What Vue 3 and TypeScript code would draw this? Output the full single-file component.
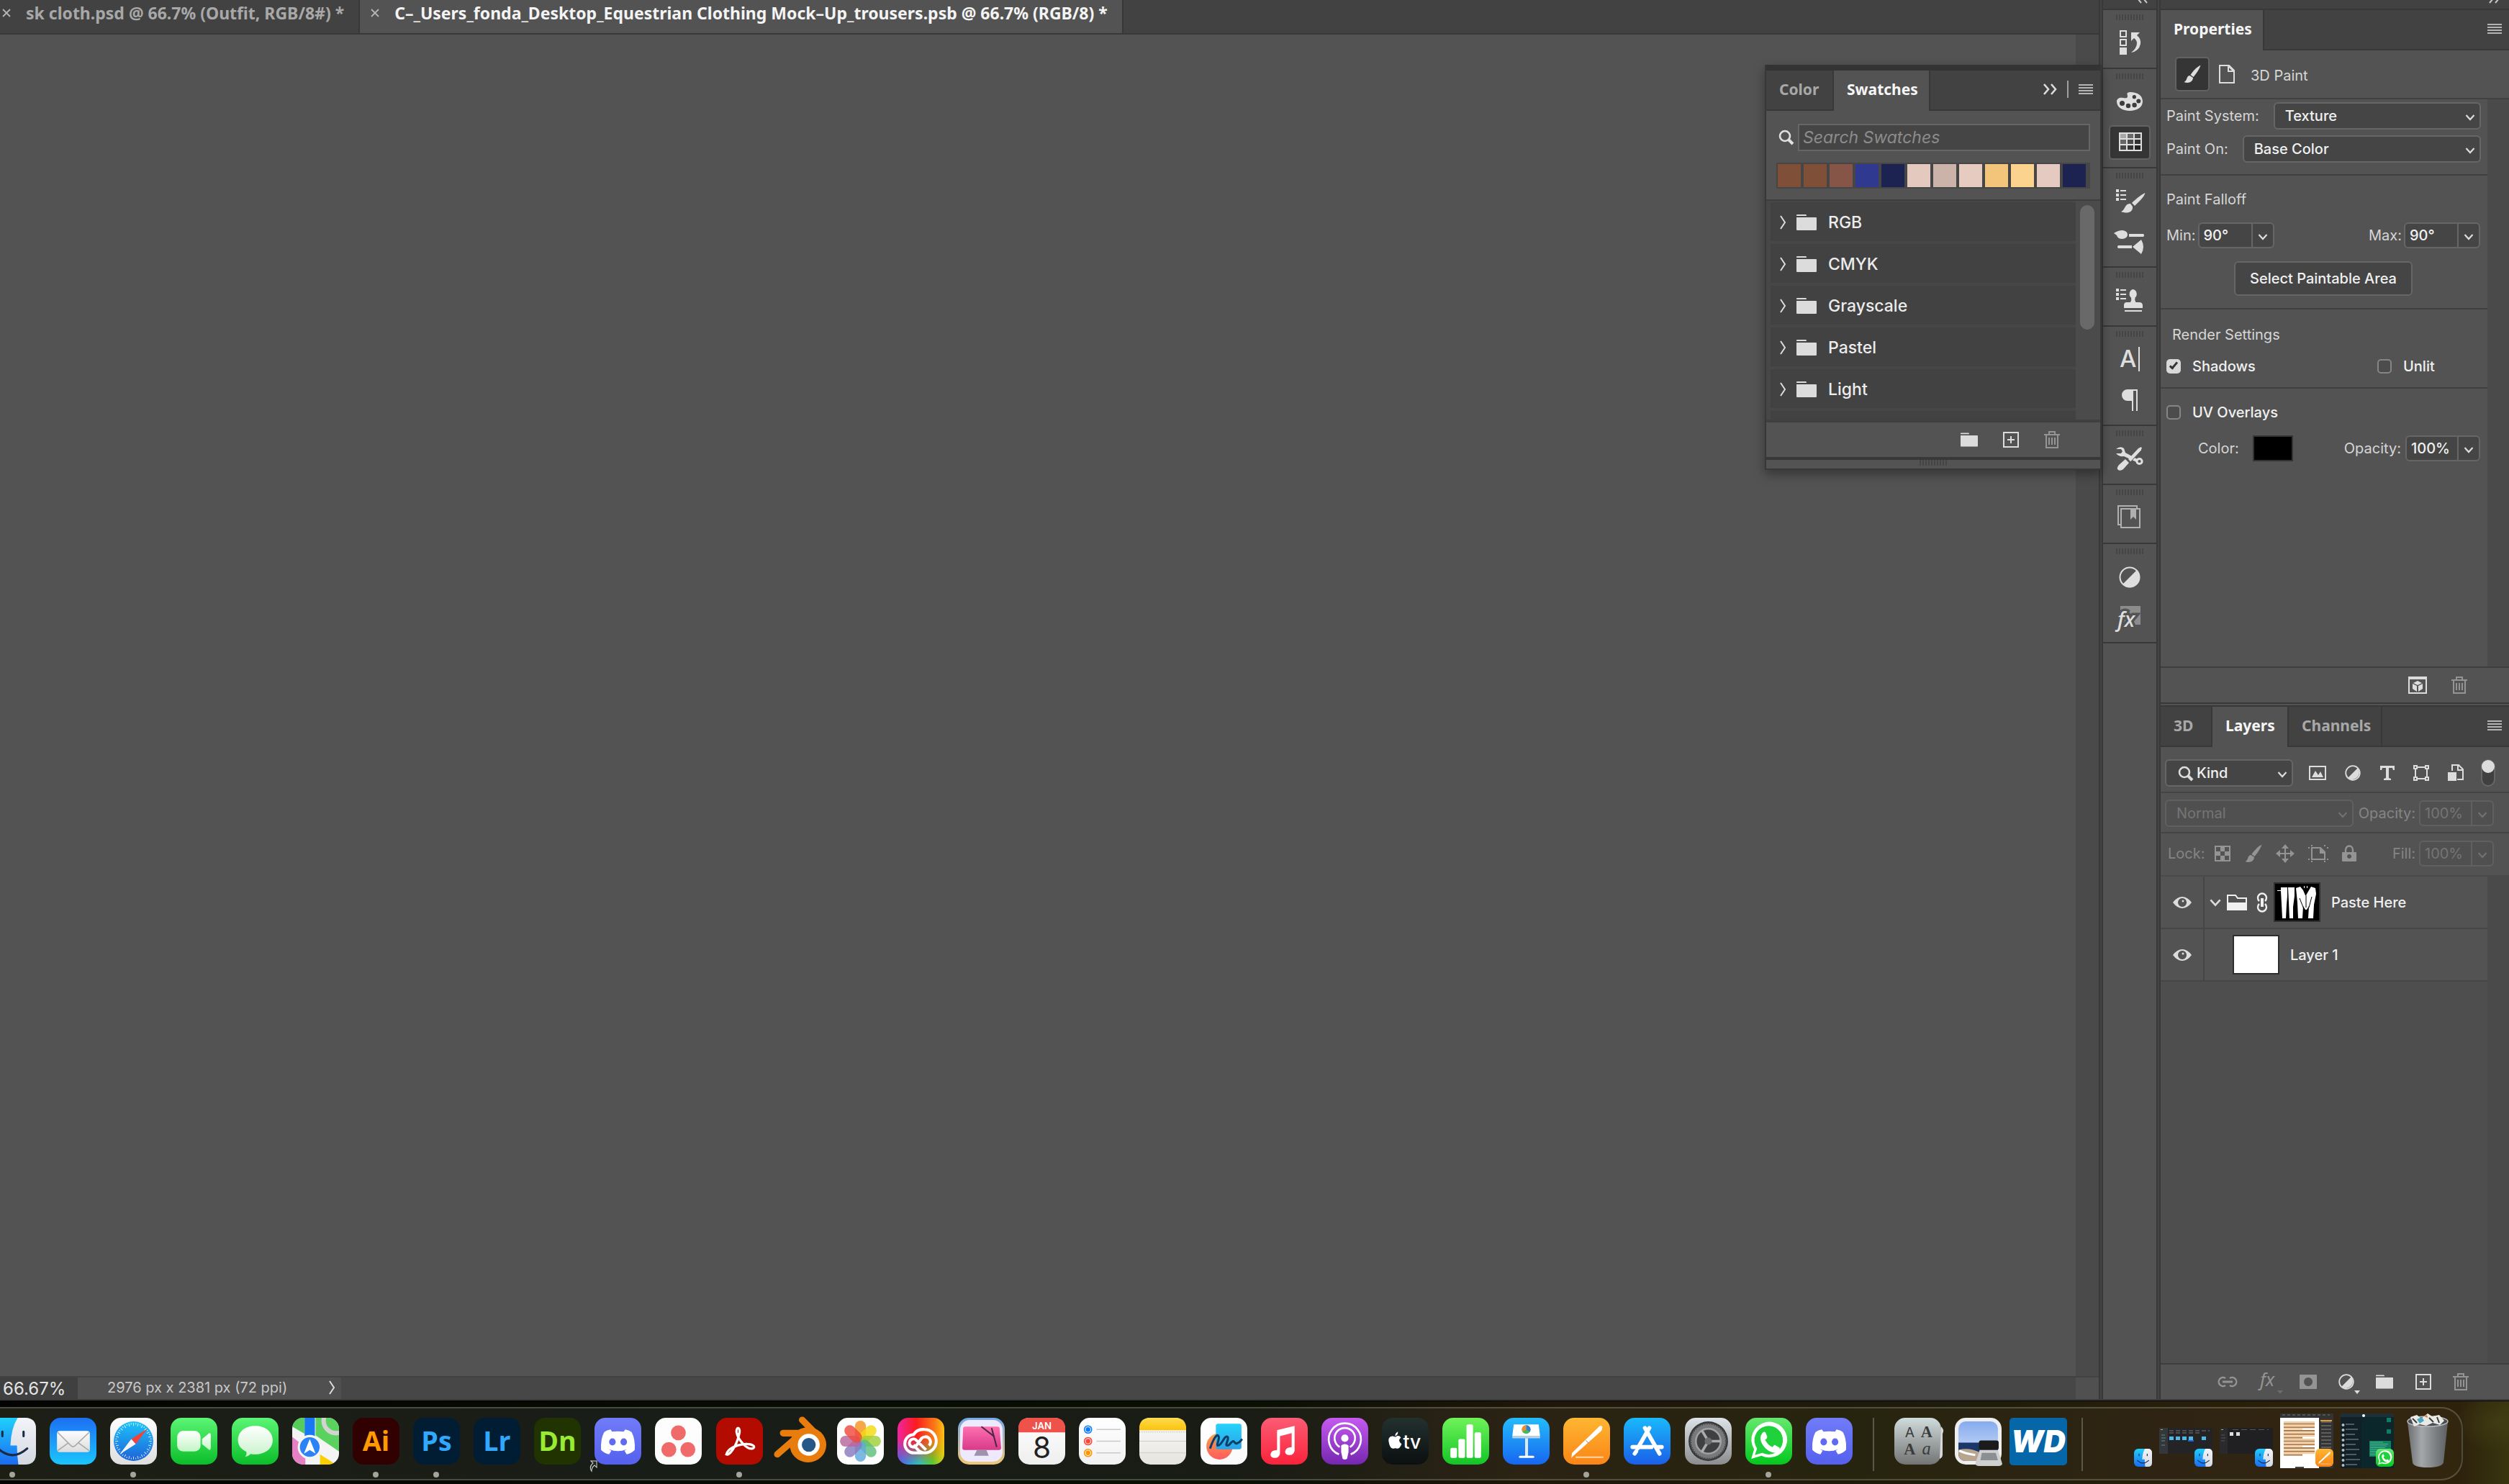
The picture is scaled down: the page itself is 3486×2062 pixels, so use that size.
<script setup lang="ts">
import { h, ref } from 'vue'

interface Glyph { w: number; h: number; body: string }

const listMark = '<path d="M1 3h4v4H1zM1 9h4v4H1zM1 15h4v4H1zM7 4h8v2H7zM7 10h8v2H7zM7 16h8v2H7z"/>'

const glyphs: Record<string, Glyph> = {
  chevron: { w: 14, h: 10, body: '<path d="M1.500 2l5.500 6 5.500-6" fill="none" stroke="currentColor" stroke-width="2.200"/>' },
  expand: { w: 10, h: 20, body: '<path d="M2 1l6 9-6 9" fill="none" stroke="currentColor" stroke-width="2"/>' },
  collapse: { w: 20, h: 16, body: '<path d="M2 1l6 7-6 7M12 1l6 7-6 7" fill="none" stroke="currentColor" stroke-width="2.600"/>' },
  left2: { w: 16, h: 14, body: '<path d="M7 1L2 7l5 6M15 1l-5 6 5 6" fill="none" stroke="currentColor" stroke-width="2"/>' },
  right2: { w: 16, h: 14, body: '<path d="M1 1l5 6-5 6M9 1l5 6-5 6" fill="none" stroke="currentColor" stroke-width="2"/>' },
  menu: { w: 20, h: 14, body: '<path d="M0 0h20v2H0zM0 4h20v2H0zM0 8h20v2H0zM0 12h20v2H0z"/>' },
  close: { w: 14, h: 14, body: '<path d="M2 2l10 10M12 2L2 12" stroke="currentColor" stroke-width="1.800"/>' },
  search: { w: 22, h: 22, body: '<circle cx="9" cy="9" r="7" fill="none" stroke="currentColor" stroke-width="2.600"/><path d="M14 14l6 6" stroke="currentColor" stroke-width="4"/>' },
  folder: { w: 28, h: 22, body: '<path d="M0 1q0-1 1-1h12q1 0 1 2H0zM0 4h27q1 0 1 1v16q0 1-1 1H1q-1 0-1-1z"/>' },
  plus: { w: 22, h: 22, body: '<path d="M1 1h20v20H1zM11 6v10M6 11h10" fill="none" stroke="currentColor" stroke-width="2"/>' },
  trash: { w: 22, h: 24, body: '<path d="M0 5h22M3 5v18h16V5M7 4V1h8v3M7 9v10M11 9v10M15 9v10" fill="none" stroke="currentColor" stroke-width="2"/>' },
  cube: { w: 26, h: 24, body: '<path d="M0 0h26v24H0zM2 4v18h22V4z" fill-rule="evenodd"/><path d="M13 6l6 3-6 3-6-3zM6 10l6 3v8l-6-4zM20 10l-6 3v8l6-4z"/>' },
  brush: { w: 24, h: 26, body: '<path d="M23.500 0.500C18 3 12 10 9.500 14l4 3C17 13 22 6 23.500 0.500zM8.500 15c-5 0-3 7-8 9 5 2 12 1 12.500-6z"/>' },
  page: { w: 22, h: 26, body: '<path d="M1 1h13l7 7v17H1z" fill="none" stroke="currentColor" stroke-width="2"/><path d="M12 1h3l7 7v2H12zM14 4v4h4z" fill-rule="evenodd"/>' },
  image: { w: 24, h: 20, body: '<path d="M1 1h22v18H1z" fill="none" stroke="currentColor" stroke-width="2"/><path d="M4 16l5-9 4 6 3-5 4 8z"/>' },
  adjust: { w: 22, h: 22, body: '<circle cx="11" cy="11" r="9.800" fill="none" stroke="currentColor" stroke-width="1.800"/><path d="M18 4a10 10 0 0 1-14 14z"/>' },
  type: { w: 20, h: 20, body: '<path d="M0 0h20v6h-2l-1-3h-5v14l3 1v2H5v-2l3-1V3H3L2 6H0z"/>' },
  shape: { w: 22, h: 22, body: '<path d="M3 3h16v16H3z" fill="none" stroke="currentColor" stroke-width="2"/><g fill="#535353" stroke="currentColor" stroke-width="2"><path d="M1 1h4v4H1zM17 1h4v4h-4zM1 17h4v4H1zM17 17h4v4h-4z"/></g>' },
  smart: { w: 22, h: 24, body: '<path d="M6 9V1h9l6 6v14h-8" fill="none" stroke="currentColor" stroke-width="2"/><path d="M14 1v7h7" fill="none" stroke="currentColor" stroke-width="2"/><path d="M0 11h12v12H0z"/>' },
  checker: { w: 22, h: 22, body: '<path d="M1 1h20v20H1z" fill="none" stroke="currentColor" stroke-width="2"/><path d="M8 2h6v6H8zM2 8h6v6H2zM14 8h6v6h-6zM8 14h6v6H8z"/>' },
  move: { w: 26, h: 26, body: '<path d="M13 3v20M3 13h20" stroke="currentColor" stroke-width="2"/><path d="M13 0l5 6H8zM13 26l5-6H8zM0 13l6-5v10zM26 13l-6-5v10z"/>' },
  artboard: { w: 28, h: 24, body: '<path d="M5 4h12l6 6v10H5z" fill="none" stroke="currentColor" stroke-width="2"/><path d="M16 4l8 8h-8zM0 3h2v2H0zM4 0h2v2H4zM22 0h2v2h-2zM26 3h2v2h-2zM0 19h2v2H0zM4 22h2v2H4zM22 22h2v2h-2zM26 19h2v2h-2z"/>' },
  lock: { w: 20, h: 24, body: '<path d="M5 11V7a5 5.500 0 0 1 10 0v4" fill="none" stroke="currentColor" stroke-width="2.400"/><path d="M1 10h18q1 0 1 1v11q0 1-1 1H1q-1 0-1-1V11q0-1 1-1zM10 13a3 3 0 1 0 .1 0z" fill-rule="evenodd"/>' },
  eye: { w: 26, h: 18, body: '<path d="M0 9Q6 1 13 1t13 8q-6 8-13 8T0 9zM13 3a6 6 0 1 0 .1 0z" fill-rule="evenodd"/><circle cx="14" cy="7" r="1.500"/>' },
  group: { w: 28, h: 22, body: '<path d="M1 12V1h11l3 4h12v8" fill="none" stroke="currentColor" stroke-width="2"/><path d="M0 11h28v11H0z"/>' },
  chain: { w: 16, h: 28, body: '<path d="M4 12a6 6 0 1 1 8 0M4 16a6 6 0 1 0 8 0" fill="none" stroke="currentColor" stroke-width="2.400"/><path d="M6 8h4v12H6z"/>' },
  link: { w: 30, h: 16, body: '<path d="M12 3a6 6 0 1 0 0 10M18 3a6 6 0 1 1 0 10" fill="none" stroke="currentColor" stroke-width="2.400"/><path d="M8 6.500h14v3H8z"/>' },
  fx: { w: 24, h: 28, body: '<text x="0" y="20" font-family="Noto Sans, sans-serif" font-style="italic" font-size="25">fx</text>' },
  mask: { w: 24, h: 20, body: '<path d="M1 0h22q1 0 1 1v18q0 1-1 1H1q-1 0-1-1V1q0-1 1-1zM12 4a6 6 0 1 0 .1 0z" fill-rule="evenodd"/>' },
  history: { w: 40, h: 40, body: '<path d="M7 3h8v8H7zM7 15h8v8H7z" fill="none" stroke="currentColor" stroke-width="2"/><path d="M6 26h10v10H6zM22 5h12L30 9Q36 14 35 21 33 31 22 33 30 27 30 20 30 16 26 13L22 17z"/>' },
  palette: { w: 40, h: 40, body: '<path d="M16.500 9C16 7 18 6 21 6c10 0 17 5 17 13S30 32 20 32 2 27 2 19c0-4 4-6 9-5s7 0 5.500-5z"/><g fill="#3c3c3c"><circle cx="9.500" cy="21.500" r="3.500"/><circle cx="18" cy="25" r="3.200"/><circle cx="26.600" cy="24" r="3.200"/><circle cx="32.300" cy="18.600" r="3"/><circle cx="26.300" cy="12.700" r="2.600"/></g>' },
  grid: { w: 40, h: 40, body: '<path d="M5 6h32v26H5z"/><path d="M7 8h8v6H7z" fill="#a8a8a8"/><path d="M17 8h8v6h-8z" fill="#6a6a6a"/><path d="M27 8h8v6h-8z" fill="#484848"/><path d="M7 16h8v6H7z" fill="#666"/><path d="M17 16h8v6h-8z" fill="#4a4a4a"/><path d="M27 16h8v6h-8z" fill="#333"/><path d="M7 24h8v6H7z" fill="#484848"/><path d="M17 24h8v6h-8z" fill="#333"/><path d="M27 24h8v6h-8z" fill="#222"/>' },
  brushes: { w: 40, h: 40, body: listMark + '<path d="M41.500 8C35 11 28 17 23 22l4 4C33 20 40 14 41.500 8zM21 23c-8-1-7 9-13 11 7 3 17 2 16-7z"/>' },
  brushSettings: { w: 40, h: 40, body: '<path d="M-2 8Q4 4 10 4q7 1 7 6t-7 6Q3 16 2 11zM19 9h20q2 2 0 4H19zM23 25H4q-2 2 0 4h19zM24 27l12-10q6 10 0 20z"/>' },
  stamp: { w: 40, h: 40, body: listMark + '<path d="M24.500 4a6 6.500 0 0 1 3 11.500q-1 3 1 6.500h5q4 0 4.500 4v4H12v-4q0-4 4-4h5q2-3 1-6.500A6 6.500 0 0 1 24.500 4zM13 33h24v2H13z"/>' },
  character: { w: 40, h: 40, body: '<text x="6" y="30" font-family="Inter, sans-serif" font-size="33" font-weight="500">A</text><path d="M32 2h2v34h-2z"/>' },
  paragraph: { w: 40, h: 40, body: '<path d="M17 5h14v30h-2V7h-4v28h-2V21h-6A8 8 0 0 1 17 5z"/>' },
  tools: { w: 40, h: 40, body: '<path d="M1 6Q7 1 12 5l2 6 24 13-2 3L12 16Q5 17 1 12l7 0 2-3-2-3z"/><circle cx="33.500" cy="23" r="3.600" fill="#535353" stroke="currentColor" stroke-width="3"/><path d="M34 4l3 3-16 17-2-3z" stroke="#535353"/><path d="M36 3l-4 2L18 20l2 2L34 8l3-3zM5 28l9-8 5 5-8 9q-4 3-7 1t1-7z"/>' },
  library: { w: 40, h: 40, body: '<path d="M7 29H4V3h26v4M8 7h26v26H8z" fill="none" stroke="currentColor" stroke-width="2"/><path d="M21 8h8v14l-4-4-4 4z"/>' },
  adjustments: { w: 40, h: 40, body: '<circle cx="20" cy="20" r="13.500" fill="none" stroke="currentColor" stroke-width="2"/><path d="M30 10a14 14 0 0 1-20 20z"/>' },
  styles: { w: 40, h: 40, body: '<path d="M7 4h28v26H7z" fill="#8c8c8c"/><text x="3" y="33" font-family="Noto Sans, sans-serif" font-style="italic" font-weight="500" font-size="29" stroke="#535353" stroke-width="7" paint-order="stroke">fx</text>' },
}

const Icon = (p: { n: string }) => {
  const g = glyphs[p.n]
  return h('svg', { width: g.w, height: g.h, viewBox: `0 0 ${g.w} ${g.h}`, fill: 'currentColor', overflow: 'visible', 'aria-hidden': 'true', innerHTML: g.body })
}
Icon.props = ['n']

const railGroups: string[][] = [
  ['history'], ['palette', 'grid'], ['brushes', 'brushSettings'], ['stamp'],
  ['character', 'paragraph'], ['tools'], ['library'], ['adjustments', 'styles'],
]
const swatches = ['#7f4f37', '#7f4f37', '#865548', '#2f398f', '#1c2350', '#e4c9be', '#ccb3a9', '#e6cbc1', '#f2c57b', '#fcd28f', '#e4cac0', '#1c2350']
const swatchFolders = ['RGB', 'CMYK', 'Grayscale', 'Pastel', 'Light']

const shadows = ref(true)
const unlit = ref(false)
const uvOverlays = ref(false)

/* Dock artwork, each drawn on a 64 × 64 board */
const lg = (id: string, a: string, b: string) =>
  `<linearGradient id="${id}" x1="0" y1="0" x2="0" y2="1"><stop offset="0" stop-color="${a}"/><stop offset="1" stop-color="${b}"/></linearGradient>`
const tile = (fill: string) => `<rect width="64" height="64" rx="15" fill="${fill}"/>`
const gtile = (id: string, a: string, b: string) => lg(id, a, b) + tile(`url(#${id})`)
const adobe = (bg: string, fg: string, t: string) =>
  tile(bg) + `<text x="32" y="45" text-anchor="middle" font-family="Open Sans, sans-serif" font-weight="700" font-size="37" fill="${fg}">${t}</text>`

const discordMark = '<path d="M22 16q-6 1-9 4Q8 30 9 44q5 5 11 6l3-5q-2-1-3-2 12 5 24 0l-3 2 3 5q6-1 11-6 1-14-4-24-3-3-9-4l-2 3q-8-1-16 0z" fill="#fff"/><ellipse cx="24.500" cy="33" rx="4.500" ry="5" fill="#616bf0"/><ellipse cx="40" cy="33" rx="4.500" ry="5" fill="#616bf0"/>'
const whatsMark = '<path d="M8 56l4-13A24.500 24.500 0 1 1 22 52z" fill="#fff"/><path d="M13 51l3-9a19.500 19.500 0 1 1 7 6z" fill="#1fd13a"/><path d="M24 20q3-2 4 1l2 5q0 2-3 4 4 8 10 10l3-3 7 4q0 6-6 7-9 0-16-9-8-11-1-19z" fill="#fff"/>'
const petals = ['#f7941d', '#f4d90f', '#9fce3b', '#5cbf7b', '#5fa9dc', '#8a79bd', '#b9679c', '#ee4b3e']
  .map((c, i) => `<rect x="24.500" y="4" width="15" height="28" rx="7.500" fill="${c}" opacity=".82" transform="rotate(${i * 45} 32 32)"/>`).join('')
const ticks = Array.from({ length: 48 }, (_, i) => `<path d="M32 7v${i % 2 ? 2 : 4}" transform="rotate(${i * 7.5} 32 32)"/>`).join('')

const art: Record<string, string> = {
  finder: gtile('fn', '#1fd0fb', '#1b6bf2') + lg('fn2', '#f2f4f8', '#d4d9e2') + '<path d="M39 0h10q15 0 15 15v34q0 15-15 15h-9q-2-12-2-26h-9Q30 14 39 0z" fill="url(#fn2)"/><path d="M18 19v6M47 19v6" stroke="#1c2a44" stroke-width="3" stroke-linecap="round"/><path d="M12 42q20 18 40 0" fill="none" stroke="#1c2a44" stroke-width="3" stroke-linecap="round"/>',
  mail: gtile('ml', '#1d6ff3', '#1bc6fd') + lg('ml2', '#fdfdfd', '#dcdcdc') + '<rect x="10" y="18" width="45" height="29" rx="4" fill="url(#ml2)"/><path d="M11 20l18 18q3 3 6 0l19-18M11 45l15-11M54 45L39 34" fill="none" stroke="#a9a9a9" stroke-width="1.500"/>',
  safari: gtile('sf', '#ffffff', '#dedede') + lg('sf2', '#1dc3fa', '#1c62d8') + '<circle cx="32" cy="32" r="27" fill="url(#sf2)"/><g stroke="#fff" stroke-width="1" opacity=".8">' + ticks + '</g><path d="M51 15L29 29l6 7z" fill="#f0433a"/><path d="M13 50l16-21 6 7z" fill="#f5f5f5"/>',
  facetime: gtile('ft', '#5bf675', '#0bbd29') + lg('ft2', '#ffffff', '#c2f5c5') + '<rect x="9" y="18" width="32" height="28" rx="8" fill="url(#ft2)"/><path d="M43 29l10-8q2 0 2 3v17q0 3-2 3l-10-8z" fill="url(#ft2)"/>',
  messages: gtile('ms', '#5bf675', '#0bbd29') + lg('ms2', '#ffffff', '#c8f2cb') + '<path d="M32 11c14 0 24 8 24 19.500S46 50 32 50q-4 0-6-.5-3 3-8 4 3-3 2-7C13 43 8.500 38 8.500 30.500 8.500 19 18 11 32 11z" fill="url(#ms2)"/>',
  maps: '<clipPath id="mpc"><rect width="64" height="64" rx="15"/></clipPath><g clip-path="url(#mpc)"><path d="M0 0h64v64H0z" fill="#f4f4f4"/><path d="M0 0h17v22L0 12z" fill="#56cc5b"/><path d="M32 0h32v46L32 24z" fill="#5bd25f"/><path d="M38 64V50l22 14z" fill="#fbcf00"/><path d="M0 26l18 14v24H0z" fill="#e581c2"/><path d="M17 0h14v34H17z" fill="#1778f2"/><circle cx="60" cy="4" r="17" fill="none" stroke="#d3d3d3" stroke-width="6"/><circle cx="24" cy="40" r="15" fill="#2b83f6" stroke="#f5f5f5" stroke-width="3"/><path d="M24 29l8 20-8-5-8 5z" fill="#fff"/></g>',
  illustrator: adobe('#310000', '#ff9a00', 'Ai'),
  photoshop: adobe('#001d34', '#31a8ff', 'Ps'),
  lightroom: adobe('#001d34', '#31a8ff', 'Lr'),
  dimension: adobe('#203301', '#98ea34', 'Dn'),
  discord: gtile('dc', '#707cf8', '#5560ee') + discordMark,
  discordAlias: gtile('dc1', '#707cf8', '#5560ee') + discordMark + '<path d="M-5 59h8v9l-3-3q-4 3-4 8-4-6 2-11z" fill="#222" stroke="#d8d8d8" stroke-width="1"/>',
  asana: tile('#fdfdfd') + '<g fill="#f06a6a"><circle cx="32" cy="20.500" r="10.200"/><circle cx="19" cy="43.500" r="10.200"/><circle cx="45" cy="43.500" r="10.200"/></g>',
  acrobat: tile('#b30b00') + '<path d="M14 50c4 2 14-10 18-30 1-8-5-8-4 0 2 10 14 24 22 22 5-2 0-7-12-6-10 1-22 6-24 14z" fill="none" stroke="#fff" stroke-width="3.200"/>',
  blender: '<path d="M35 3l20 20M9 21h30M1 50l32-28" stroke="#e87d0d" stroke-width="9" stroke-linecap="round"/><ellipse cx="43" cy="37" rx="25" ry="24" fill="#e87d0d"/><circle cx="44" cy="37" r="15" fill="#fff"/><circle cx="44" cy="37" r="9.500" fill="#265787"/>',
  photos: tile('#fefefe') + '<g>' + petals + '</g>',
  creative: '<linearGradient id="cc" x1="0" y1="0" x2="1" y2="0"><stop offset="0" stop-color="#f0259f"/><stop offset=".4" stop-color="#fa1c20"/><stop offset=".8" stop-color="#fb7a15"/><stop offset="1" stop-color="#f9c313"/></linearGradient><linearGradient id="cc2" x1="0" y1="0" x2="1" y2="0"><stop offset="0" stop-color="#3e63f5"/><stop offset=".45" stop-color="#27c5c7"/><stop offset=".75" stop-color="#4fd02e"/><stop offset="1" stop-color="#d8d80e"/></linearGradient><linearGradient id="cc3" x1="0" y1="0" x2="0" y2="1"><stop offset=".45" stop-color="#000"/><stop offset="1" stop-color="#fff"/></linearGradient><mask id="ccm"><path d="M0 0h64v64H0z" fill="url(#cc3)"/></mask>' + tile('url(#cc)') + '<rect width="64" height="64" rx="15" fill="url(#cc2)" mask="url(#ccm)"/><path d="M35 48H23a12 12 0 0 1-1-25q5-8 15-7a16 16 0 0 1 0 32q-5 0-9-4l-6-7M43 38a7 7 0 0 0-5-12q-3 0-5 2l-8 11a5.500 5.500 0 1 1 1-8l13 13" fill="none" stroke="#fff" stroke-width="4"/>',
  cleaner: gtile('cl', '#75a8ec', '#f1c877') + lg('cl2', '#ff6fb0', '#d83a8a') + '<rect x="3" y="3" width="58" height="57" rx="13" fill="#efe9fd"/><path d="M10 12h44q3 0 3 3l2 26q0 3-3 3H9q-3 0-3-3l1-26q0-3 3-3z" fill="url(#cl2)"/><path d="M26 44h13l3 8H22z" fill="#9d93ad"/><path d="M32 12l18 14M46 14l7 26" stroke="#4c2748" stroke-width="2"/>',
  calendar: gtile('ca', '#ffffff', '#eeeeee') + '<path d="M0 20v-5Q0 0 15 0h34q15 0 15 15v5z" fill="#ee524a"/><text x="32" y="16" text-anchor="middle" font-family="Inter, sans-serif" font-weight="600" font-size="13" fill="#fff">JAN</text><text x="32" y="55" text-anchor="middle" font-family="Inter, sans-serif" font-weight="400" font-size="40" fill="#222">8</text>',
  reminders: gtile('rm', '#ffffff', '#f1f1f1') + '<g stroke="#c9c9c9" stroke-width="1.500"><path d="M24 16h33M24 32h33M24 48h33"/></g><g fill="none" stroke-width="1.500"><circle cx="12.500" cy="16" r="5" stroke="#0a7bff"/><circle cx="12.500" cy="32" r="5" stroke="#f9453a"/><circle cx="12.500" cy="48" r="5" stroke="#ff9500"/></g><circle cx="12.500" cy="16" r="3.200" fill="#0a7bff"/><circle cx="12.500" cy="32" r="3.200" fill="#f9453a"/><circle cx="12.500" cy="48" r="3.200" fill="#ff9500"/>',
  notes: gtile('nt', '#fbfbfb', '#e6e4df') + lg('nt2', '#fedb4f', '#fbc30b') + '<path d="M0 17v-2Q0 0 15 0h34q15 0 15 15v2z" fill="url(#nt2)"/><path d="M0 19.500h64" stroke="#bbb" stroke-dasharray="1.500 1.500"/><path d="M0 32h64M0 48h64" stroke="#cdcdcb" stroke-width="1"/>',
  freeform: gtile('fr', '#ffffff', '#fafafa') + lg('fr2', '#25d3fa', '#2ba3e6') + lg('fr3', '#f8a24a', '#ff5a5c') + '<circle cx="26" cy="39" r="18" fill="url(#fr3)"/><rect x="21" y="8" width="35" height="35" rx="3" fill="url(#fr2)"/><path d="M13 42c5-14 10-22 12-16 1 4-4 12-1 12 5 0 9-15 13-12 3 3-5 12 0 12 3 0 5-6 8-6 2 1 2 4 5 3 4-1 5-4 7-6" fill="none" stroke="#0e3e66" stroke-width="3"/>',
  music: gtile('mu', '#fb5c74', '#fa233b') + '<path d="M22 17l24-6v34q-1 6-7 6-6 0-6-5 1-6 9-6V21l-16 4v24q-1 6-7 6-6 0-6-5 1-6 9-6z" fill="#fff"/>',
  podcasts: gtile('po', '#c65af0', '#7527b0') + '<g fill="none" stroke="#fff" stroke-width="2.600"><path d="M24 50a22 22 0 1 1 16 0"/><path d="M25 40a14 14 0 1 1 14 0"/></g><circle cx="32" cy="28" r="5" fill="#fff"/><path d="M27 38q5-4 10 0v9l-2 9q-3 2-6 0l-2-9z" fill="#fff"/>',
  tv: gtile('tv', '#22312f', '#0b0f10') + '<path d="M19 26q4-3 7 1-5 4 1 9-3 7-6 6-3-1-5 0-4 1-6-6-3-10 4-11 2 0 4 1zM18 25q0-4 4-6 0 5-4 6z" fill="#fff"/><text x="29" y="42" font-family="Inter, sans-serif" font-weight="500" font-size="26" fill="#fff">tv</text>',
  numbers: gtile('nu', '#6ff359', '#13c527') + '<g fill="#fff"><rect x="11" y="41" width="9" height="14" rx="2"/><rect x="22" y="29" width="9" height="26" rx="2"/><rect x="33" y="9" width="9" height="46" rx="2"/><rect x="44" y="20" width="9" height="35" rx="2"/></g>',
  keynote: gtile('ke', '#23bcfb', '#1766f0') + '<path d="M15 9h34l2 16H13z" fill="#fff"/><path d="M13 25h38v3H13z" fill="#bcd0e4"/><path d="M30.500 28h4v25h-4z" fill="#dfe8f3"/><rect x="22" y="52" width="21" height="3" rx="1.500" fill="#fff"/><circle cx="32" cy="16" r="6" fill="#49b65b"/><path d="M32 16v-6a6 6 0 0 1 5 9z" fill="#3279e8"/><path d="M32 16v-6a6 6 0 0 0-5 9z" fill="#f18c2e"/>',
  pages: gtile('pa', '#feb631', '#fb8517') + '<path d="M52 11q3 1 0 7L15 51l-4 4 1-7L47 14q3-4 5-3z" fill="#fff"/><path d="M31 31l4 4" stroke="#999"/><path d="M17 54h38" stroke="#ffd9a4" stroke-width="2"/>',
  store: gtile('st', '#19b9fb', '#1b5fe8') + '<g stroke="#fff" stroke-width="5.500" stroke-linecap="round"><path d="M35 14L19 42M29 14l20 35M12 40h26M46 40h6"/><path d="M17 46l-2 3"/></g>',
  settings: gtile('se', '#dde3e8', '#8d8d8f') + '<circle cx="32" cy="32" r="27" fill="#2f3032"/><circle cx="32" cy="32" r="24.500" fill="#77797b" stroke="#48494b" stroke-width="3" stroke-dasharray="2 1.500"/><circle cx="32" cy="32" r="17" fill="#3f4042" stroke="#a0a1a3" stroke-width="2.500"/><g stroke="#a9aaac" stroke-width="3.500"><path d="M32 32h17M32 32l-9-15M32 32l-9 15"/></g><circle cx="32" cy="32" r="5" fill="#6d6e70"/>',
  whatsapp: gtile('wa', '#65e86f', '#03c81d') + whatsMark,
  fontbook: gtile('fb', '#d0dcdc', '#737373') + '<path d="M64 12q5 4 2 10v28q0 5-4 6z" fill="#d8d8d8"/><g fill="#3b3b3b" text-anchor="middle" font-size="22" font-family="Liberation Serif, serif"><text x="21" y="27" font-family="Inter, sans-serif" font-size="19">A</text><text x="44" y="27" font-weight="700">A</text><text x="21" y="50" font-weight="700">A</text><text x="44" y="50" font-style="italic" font-size="24">a</text></g>',
  preview: tile('#eeeeee') + lg('pv', '#86abef', '#d7e3f7') + '<rect x="5" y="5" width="54" height="54" rx="10" fill="url(#pv)"/><path d="M5 34h54v15q0 10-10 10H15Q5 59 5 49z" fill="#1b3668"/><path d="M5 44q15-4 30 4v11H15Q5 59 5 49z" fill="#b8a58f"/><path d="M6 45q8 4 22 6" stroke="#fff" stroke-width="3"/><rect x="33" y="31" width="27" height="13" rx="3" fill="#1b1b1b"/><path d="M34 44h25l6 19q-1 3-5 3H33q-4 0-5-3z" fill="#cfcfcf"/><path d="M37 48h19l3 10H35z" fill="#8a8f94"/>',
}

const apps: { id: string; run?: boolean }[] = [
  { id: 'finder', run: true }, { id: 'mail' }, { id: 'safari', run: true }, { id: 'facetime' }, { id: 'messages' }, { id: 'maps' },
  { id: 'illustrator', run: true }, { id: 'photoshop', run: true }, { id: 'lightroom' }, { id: 'dimension' }, { id: 'discordAlias' },
  { id: 'asana' }, { id: 'acrobat', run: true }, { id: 'blender' }, { id: 'photos' }, { id: 'creative' }, { id: 'cleaner' },
  { id: 'calendar' }, { id: 'reminders' }, { id: 'notes' }, { id: 'freeform' }, { id: 'music' }, { id: 'podcasts' }, { id: 'tv' },
  { id: 'numbers' }, { id: 'keynote' }, { id: 'pages', run: true }, { id: 'store' }, { id: 'settings' }, { id: 'whatsapp', run: true }, { id: 'discord' },
]

const rows = (n: number, f: (i: number) => string) => Array.from({ length: n }, (_, i) => f(i)).join('')
const files = (xs: number[]) => xs.map((x) => `<path d="M${x} 12h6v5h-6z" fill="#4fb6e8"/>`).join('')
const windows: { art: string; tall: boolean; badge: string }[] = [
  { tall: false, badge: 'finder', art: '' },
  { tall: false, badge: 'finder', art: '<path d="M0 0h74v36H0z" fill="#242426"/><path d="M0 0h12v36H0z" fill="#34373a"/><path d="M2 2h3v1H2z" fill="#e0a040"/><path d="M3 10h5M3 14h6M3 18h5M3 24h5" stroke="#5a8796"/><path d="M14 4h56M14 7h44" stroke="#777" stroke-dasharray="6 3"/>' + files([14, 23, 32, 41, 59]) + '<path d="M40 17h8v2h-8z" fill="#1c64d8"/>' },
  { tall: false, badge: 'finder', art: '<path d="M0 0h74v36H0z" fill="#202022"/><path d="M0 0h11v36H0z" fill="#292a2b"/><path d="M2 2h3v1H2z" fill="#e0a040"/><path d="M2 10h5M2 14h6M2 18h5" stroke="#555"/><path d="M14 6h5v5h-5zM23 6h5v5h-5z" fill="#ddd"/><path d="M18 2.500h50" stroke="#555" stroke-dasharray="8 4"/>' },
  { tall: true, badge: 'pages', art: '<path d="M0 0h74v76H0z" fill="#333"/><path d="M0 6h54v70H0z" fill="#fff"/><path d="M3 2h66" stroke="#777" stroke-dasharray="4 3"/>' + rows(20, (i) => `<path d="M5 ${12 + i * 2.4}h${i % 5 === 4 ? 26 : 43}" stroke="${i % 2 ? '#b07a48' : '#f3cfa0'}" stroke-width="2"/>`) + rows(10, (i) => `<path d="M57 ${12 + i * 5}h14" stroke="#8a8a8a"/>`) + '<path d="M56 10h16" stroke="#e79a32" stroke-width="2"/><path d="M21 74h12v2H21z" fill="#444"/>' },
  { tall: true, badge: 'whatsapp', art: '<path d="M0 0h74v76H0z" fill="#111f27"/><path d="M29 0h45v76H29z" fill="#0b272b"/><path d="M0 0h74v5H0z" fill="#1f2f38"/><circle cx="32" cy="3" r="2" fill="#fff"/>' + rows(9, (i) => `<circle cx="3.500" cy="${16 + i * 7}" r="2" fill="#b7bfc4"/><path d="M7 ${15 + i * 7}h${12 + (i * 5) % 9}" stroke="#8896a0"/>`) + '<path d="M64 6h6v6h-6zM64 22h6v6h-6z" fill="#0f7b61"/><path d="M40 38h30v22H40z" fill="#12805f"/>' + rows(8, (i) => `<path d="M41 ${40 + i * 2.5}h${18 + (i * 7) % 9}" stroke="#4fb797" stroke-width="1"/>`) },
]
</script>

<template>
  <div class="desktop">
    <div class="workspace">
      <main class="document">
        <div class="doc-tabs" role="tablist">
          <div class="doc-tab">
            <button class="plain" aria-label="Close"><Icon n="close" /></button>
            <span>sk cloth.psd @ 66.7% (Outfit, RGB/8#) *</span>
          </div>
          <div class="doc-tab on">
            <button class="plain" aria-label="Close"><Icon n="close" /></button>
            <span>C–_Users_fonda_Desktop_Equestrian Clothing Mock–Up_trousers.psb @ 66.7% (RGB/8) *</span>
          </div>
        </div>
        <div class="canvas-row"><div class="canvas"></div><div class="vscroll"></div></div>
        <footer class="status">
          <input class="zoom" aria-label="Zoom" value="66.67%" />
          <div class="doc-info"><span>2976 px x 2381 px (72 ppi)</span><button class="plain" aria-label="More info"><Icon n="expand" /></button></div>
          <div class="hscroll"></div><div class="corner"></div>
        </footer>

        <section class="float">
          <div class="float-bar"></div>
          <div class="tabs">
            <button class="tab color-tab">Color</button><button class="tab on swatch-tab">Swatches</button>
            <div class="tab-tools"><button class="plain" aria-label="Collapse"><Icon n="collapse" /></button><i></i><button class="plain" aria-label="Menu"><Icon n="menu" /></button></div>
          </div>
          <div class="search"><Icon n="search" /><input placeholder="Search Swatches" aria-label="Search Swatches" /></div>
          <div class="strip"><button v-for="(c, i) in swatches" :key="i" :style="{ background: c }" :aria-label="c"></button></div>
          <div class="folders">
            <div class="folder-list">
              <button v-for="f in swatchFolders" :key="f" class="folder"><Icon n="expand" /><Icon n="folder" /><span>{{ f }}</span></button>
              <div class="folder"></div>
            </div>
            <div class="folder-scroll"><i></i></div>
          </div>
          <div class="float-foot">
            <button class="plain small-folder" aria-label="New group"><Icon n="folder" /></button>
            <button class="plain" aria-label="New swatch"><Icon n="plus" /></button>
            <button class="plain dim" aria-label="Delete"><Icon n="trash" /></button>
          </div>
          <div class="float-grip"><i class="grip"></i></div>
        </section>
      </main>

      <aside class="rail">
        <div class="top-strip"><Icon n="left2" /></div>
        <div v-for="(g, i) in railGroups" :key="i" class="rail-group">
          <i class="grip"></i>
          <button v-for="n in g" :key="n" class="rail-btn" :class="{ on: n === 'grid', soft: n === 'library' }" :aria-label="n"><span><Icon :n="n" /></span></button>
        </div>
      </aside>

      <aside class="panels">
        <div class="top-strip"><Icon n="right2" /></div>
        <section class="properties">
          <div class="tabs">
            <button class="tab on prop-tab">Properties</button>
            <div class="tab-tools"><button class="plain" aria-label="Menu"><Icon n="menu" /></button></div>
          </div>
          <header class="mode">
            <button class="mode-btn" aria-label="Paint"><Icon n="brush" /></button>
            <button class="plain" aria-label="Document"><Icon n="page" /></button>
            <span>3D Paint</span>
          </header>
          <div class="scroller">
            <div class="fields">
              <div class="block paint">
                <div class="line">
                  <label for="sys">Paint System:</label>
                  <div class="select"><select id="sys"><option>Texture</option></select><Icon n="chevron" /></div>
                </div>
                <div class="line">
                  <label for="on">Paint On:</label>
                  <div class="select"><select id="on"><option>Base Color</option></select><Icon n="chevron" /></div>
                </div>
              </div>
              <div class="block falloff">
                <h3>Paint Falloff</h3>
                <div class="line spread">
                  <div class="line"><label for="min">Min:</label><div class="combo"><input id="min" value="90°" /><button aria-label="Open"><Icon n="chevron" /></button></div></div>
                  <div class="line"><label for="max">Max:</label><div class="combo"><input id="max" value="90°" /><button aria-label="Open"><Icon n="chevron" /></button></div></div>
                </div>
                <button class="push">Select Paintable Area</button>
              </div>
              <div class="block render">
                <h3>Render Settings</h3>
                <div class="line spread">
                  <label class="check"><input v-model="shadows" type="checkbox" />Shadows</label>
                  <label class="check unlit"><input v-model="unlit" type="checkbox" />Unlit</label>
                </div>
              </div>
              <div class="block overlays">
                <label class="check"><input v-model="uvOverlays" type="checkbox" />UV Overlays</label>
                <div class="line spread">
                  <div class="line colour"><span>Color:</span><button class="well" aria-label="Overlay color"></button></div>
                  <div class="line"><label for="uvo">Opacity:</label><div class="combo percent"><input id="uvo" value="100%" /><button aria-label="Open"><Icon n="chevron" /></button></div></div>
                </div>
              </div>
            </div>
            <div class="gutter"></div>
          </div>
          <footer class="foot">
            <button class="plain" aria-label="Render"><Icon n="cube" /></button>
            <button class="plain dim" aria-label="Delete"><Icon n="trash" /></button>
          </footer>
        </section>

        <section class="layers">
          <div class="tabs">
            <button class="tab tab-3d">3D</button><button class="tab on layers-tab">Layers</button><button class="tab channels-tab">Channels</button>
            <div class="tab-tools"><button class="plain" aria-label="Menu"><Icon n="menu" /></button></div>
          </div>
          <div class="bar filter">
            <div class="select kind"><Icon n="search" class="lead" /><select aria-label="Filter"><option>Kind</option></select><Icon n="chevron" /></div>
            <div class="icons">
              <button v-for="n in ['image', 'adjust', 'type', 'shape', 'smart']" :key="n" class="plain" :aria-label="n"><Icon :n="n" /></button>
            </div>
            <button class="toggle" aria-label="Filter on"><i></i></button>
          </div>
          <div class="bar blend off">
            <div class="select"><select aria-label="Blend mode" disabled><option>Normal</option></select><Icon n="chevron" /></div>
            <label for="lop">Opacity:</label><div class="combo percent"><input id="lop" value="100%" disabled /><button disabled aria-label="Open"><Icon n="chevron" /></button></div>
          </div>
          <div class="bar locks off">
            <span>Lock:</span>
            <div class="icons">
              <button v-for="n in ['checker', 'brush', 'move', 'artboard', 'lock']" :key="n" class="plain" :aria-label="n"><Icon :n="n" /></button>
            </div>
            <label for="fill">Fill:</label><div class="combo percent"><input id="fill" value="100%" disabled /><button disabled aria-label="Open"><Icon n="chevron" /></button></div>
          </div>
          <div class="scroller">
            <ul class="layer-list">
              <li>
                <button class="eye" aria-label="Visibility"><Icon n="eye" /></button>
                <div class="layer">
                  <button class="plain" aria-label="Collapse group"><Icon n="chevron" class="wide" /></button><Icon n="group" /><Icon n="chain" />
                  <svg class="thumb" viewBox="0 0 61 51" preserveAspectRatio="none" aria-hidden="true"><path d="M0 0h61v51H0z" fill="#000" /><path d="M3 9h5V5h9v12l-1 12-1 19h-5L9 28 8 10H3zM18 5h9v12l-2 15v16h-5l-1-22zM29 6l6-2 4 5 3 7h1l4-7 3-5 6 2 1 8-3 15-1 19h-7l1-17-3 5h-2l-3-5-1 17h-6l-1-22z" fill="#fff" /><path d="M34 20l6 15M51 18l-4 15M43 16v17" stroke="#000" fill="none" /><path d="M40 3h1v3h-1zM44 3h1v3h-1z" fill="#fff" /></svg>
                  <span>Paste Here</span>
                </div>
              </li>
              <li>
                <button class="eye" aria-label="Visibility"><Icon n="eye" /></button>
                <div class="layer child"><div class="thumb blank"></div><span>Layer 1</span></div>
              </li>
            </ul>
            <div class="gutter"></div>
          </div>
          <footer class="foot">
            <button class="plain dim" aria-label="Link"><Icon n="link" /></button>
            <button class="plain dim arrow" aria-label="Effects"><Icon n="fx" /></button>
            <button class="plain dim" aria-label="Mask"><Icon n="mask" /></button>
            <button class="plain arrow" aria-label="Adjustment"><Icon n="adjust" /></button>
            <button class="plain small-folder" aria-label="Group"><Icon n="folder" /></button>
            <button class="plain" aria-label="New layer"><Icon n="plus" /></button>
            <button class="plain dim" aria-label="Delete"><Icon n="trash" /></button>
          </footer>
        </section>
      </aside>
    </div>

    <div class="dock-area">
      <nav class="dock">
        <div class="apps">
          <button v-for="(a, i) in apps" :key="i" class="app" :class="{ run: a.run }" :aria-label="a.id">
            <svg viewBox="0 0 64 64" v-html="art[a.id]"></svg>
          </button>
        </div>
        <i class="rule"></i>
        <div class="extras">
          <button class="app" aria-label="Font Book"><svg viewBox="0 0 64 64" v-html="art.fontbook"></svg></button>
          <button class="app" aria-label="Preview"><svg viewBox="0 0 64 64" v-html="art.preview"></svg></button>
          <button class="wd">WD</button>
        </div>
        <i class="rule"></i>
        <div class="minis">
          <button v-for="(w, i) in windows" :key="i" class="mini" :aria-label="w.badge">
            <svg class="shot" :class="{ tall: w.tall }" :viewBox="w.tall ? '0 0 74 76' : '0 0 74 36'" v-html="w.art"></svg>
            <svg class="badge" viewBox="0 0 64 64" v-html="art[w.badge]"></svg>
          </button>
          <button class="bin" aria-label="Trash">
            <svg viewBox="0 0 58 76">
              <defs><linearGradient id="bin" x1="0" x2="1"><stop offset="0" stop-color="#6c6f72" /><stop offset=".35" stop-color="#a4a7aa" /><stop offset=".7" stop-color="#7d8083" /><stop offset="1" stop-color="#5c5f62" /></linearGradient></defs>
              <path d="M1 12q28-12 56 0l-6 56q-2 7-22 7T8 68z" fill="url(#bin)" />
              <ellipse cx="29" cy="11" rx="28" ry="7" fill="#4b4d50" stroke="#b9bcc0" stroke-width="1.500" />
              <path d="M5 5l9-3 6 5 9-7 6 4 10-2 7 8-6 6-10-3-9 4-9-2-8 3z" fill="#e9e9e6" /><path d="M14 8l7-3 3 5-6 4z" fill="#4ba9bb" /><path d="M31 6l6 6M8 7l6 6M42 5l3 8" stroke="#3b3b3b" stroke-width="2" /><path d="M24 4l4-2 1 4z" fill="#d9763c" />
            </svg>
          </button>
        </div>
      </nav>
    </div>
  </div>
</template>

<style>
html, body { margin: 0; background: #0a0a06; }
</style>

<style scoped>
.desktop {
  --bg: #535353; --dark: #424242; --edge: #383838; --field: #454545; --stroke: #666;
  display: flex; flex-direction: column; min-height: 100vh; overflow: hidden;
  font-family: Inter, "Liberation Sans", sans-serif; font-size: 20px; line-height: 24px; color: #d6d6d6;
}
.desktop *, .desktop *::before, .desktop *::after { box-sizing: border-box; }
button, input, select { font: inherit; color: inherit; margin: 0; padding: 0; border: 0; background: none; border-radius: 0; outline: 0; }
svg { display: block; flex: none; }
ul { list-style: none; margin: 0; padding: 0; }
h3 { margin: 0; font-size: 20px; font-weight: 400; line-height: 24px; }
.plain { display: flex; color: #dcdcdc; }
.plain.dim { color: #949494; }
.grip { display: block; width: 38px; height: 8px; background: repeating-linear-gradient(90deg, #454545 0 2px, transparent 2px 4px); }

.workspace { flex: 1; display: flex; background: var(--bg); border-bottom: 2px solid #3b3b3b; }

/* document */
.document { position: relative; z-index: 1; flex: 1; min-width: 0; display: flex; flex-direction: column; border-right: 2px solid var(--edge); }
.doc-tabs { display: flex; height: 48px; background: var(--dark); border-bottom: 2px solid var(--edge); }
.doc-tab { display: flex; align-items: flex-start; gap: 20px; padding: 4px 20px 0 2px; border-right: 2px solid var(--edge); font: 700 23px/28px "Noto Sans", "Open Sans", sans-serif; color: #a8a8a8; white-space: nowrap; }
.doc-tab .plain { color: #b4b4b4; padding-top: 7px; }
.doc-tab.on { background: var(--bg); color: #f4f4f4; padding-left: 14px; }
.canvas-row { flex: 1; display: flex; }
.canvas { flex: 1; background: var(--bg); }
.vscroll { width: 32px; background: #4a4a4a; }
.status { display: flex; height: 32px; background: #474747; border-top: 2px solid #424242; }
.zoom { width: 108px; padding-left: 4px; font-size: 24px; background: #404040; color: #e4e4e4; }
.doc-info { display: flex; align-items: center; justify-content: space-between; width: 366px; padding: 0 8px 2px 41px; background: #505050; color: #c8c8c8; white-space: nowrap; }
.hscroll { flex: 1; }
.corner { width: 32px; background: #505050; }

/* tabs */
.tabs { display: flex; height: 56px; background: var(--dark); border-bottom: 2px solid var(--edge); }
.tab { height: 56px; padding: 0 18px 4px; border-right: 2px solid var(--edge); font: 700 21px/26px "Noto Sans", "Open Sans", sans-serif; color: #a8a8a8; text-align: left; white-space: nowrap; }
.tab.on { background: var(--bg); color: #f6f6f6; }
.tab-tools { margin-left: auto; display: flex; align-items: center; gap: 14px; padding: 0 10px 2px 0; }
.tab-tools .plain { color: #b4b4b4; }
.tab-tools i { width: 2px; height: 24px; background: #a0a0a0; }
.color-tab { width: 94px; }
.swatch-tab { width: 134px; }
.prop-tab { width: 144px; }
.tab-3d { width: 72px; }
.layers-tab { width: 106px; }
.channels-tab { width: 130px; }

/* floating swatches */
.float { position: absolute; top: 90px; right: -4px; width: 468px; background: var(--bg); border: 2px solid var(--edge); border-top: 0; box-shadow: 0 6px 14px rgba(0, 0, 0, .35); }
.float-bar { height: 8px; background: #333; }
.float .tab-tools .plain:first-child { color: #dcdcdc; }
.search { display: flex; align-items: center; gap: 5px; padding: 18px 14px 16px 17px; color: #e0e0e0; }
.search input { flex: 1; min-width: 0; height: 38px; padding: 0 5px; border: 2px solid var(--stroke); background: var(--field); font-size: 23px; }
.search input::placeholder { color: #8c8c8c; opacity: 1; font-style: italic; }
.strip { display: flex; margin: 0 14px 15px; background: #464646; }
.strip button { width: 36px; height: 36px; border: 2px solid #464646; }
.folders { display: flex; height: 310px; border-top: 2px solid #3e3e3e; border-bottom: 4px solid #404040; background: #474747; }
.folder-list { flex: 1; padding-left: 6px; overflow: hidden; }
.folder { display: flex; align-items: center; width: 100%; height: 58px; padding: 2px 0 0 12px; border-top: 2px solid #474747; border-bottom: 2px solid #474747; background: #424242; font-size: 23px; font-weight: 500; color: #ececec; }
.folder svg { color: #dcdcdc; }
.folder svg:first-child { margin-right: 14px; }
.folder span { margin-left: 16px; }
.folder-scroll { width: 34px; padding: 6px 0 0 6px; background: #4b4b4b; }
.folder-scroll i { display: block; width: 20px; height: 173px; border-radius: 10px; background: #696969; }
.float-foot { display: flex; align-items: center; justify-content: flex-end; gap: 35px; height: 48px; padding-right: 56px; }
.small-folder svg { width: 24px; height: 20px; }
.float-grip { height: 16px; display: flex; justify-content: center; border-top: 4px solid var(--edge); }

/* rail */
.rail { width: 82px; padding: 0 4px; background: var(--bg); box-shadow: inset 2px 0 #444, inset 4px 0 var(--edge), inset -2px 0 #444, inset -4px 0 var(--edge); }
.top-strip { display: flex; height: 14px; background: var(--dark); border-bottom: 2px solid var(--edge); color: #c8c8c8; overflow: hidden; }
.top-strip svg { margin-top: -9px; }
.rail .top-strip { justify-content: flex-end; padding-right: 12px; }
.rail-group { display: flex; flex-direction: column; align-items: center; padding: 6px 0; border-bottom: 2px solid var(--edge); }
.rail-group .grip { margin-bottom: 4px; }
.rail-btn { display: flex; align-items: center; justify-content: center; height: 56px; color: #dedede; }
.rail-btn span { display: flex; align-items: center; justify-content: center; width: 58px; height: 48px; border: 2px solid transparent; border-radius: 5px; }
.rail-btn.on span { background: #353535; border-color: #626262; }
.rail-btn.soft { color: #b0b0b0; }

/* panels */
.panels { width: 486px; border-left: 2px solid var(--edge); display: flex; flex-direction: column; }
.panels .top-strip { justify-content: flex-end; padding-right: 12px; }
.properties { display: flex; flex-direction: column; height: 968px; border-bottom: 6px double var(--edge); }
.mode { display: flex; align-items: center; height: 68px; padding: 0 0 0 20px; border-bottom: 2px solid #414141; }
.mode-btn { display: flex; align-items: center; justify-content: center; width: 48px; height: 48px; margin-right: 13px; border: 2px solid #626262; border-radius: 5px; background: #353535; color: #dedede; }
.mode span { margin-left: 22px; padding-top: 4px; }
.scroller { flex: 1; display: flex; min-height: 0; }
.gutter { width: 30px; background: #4a4a4a; }
.fields { flex: 1; min-width: 0; }
.block { border-bottom: 2px solid #414141; }
.line { display: flex; align-items: center; }
.spread { justify-content: space-between; }
.select { position: relative; flex: 1; height: 38px; }
.select select { appearance: none; width: 100%; height: 100%; padding: 0 32px 0 14px; border: 2px solid var(--stroke); border-radius: 6px; background: var(--field); color: #f0f0f0; font-weight: 500; opacity: 1; }
.select > svg:last-child { position: absolute; right: 8px; top: 16px; pointer-events: none; color: #dcdcdc; }
.combo { display: flex; height: 36px; width: 106px; border: 2px solid var(--stroke); border-radius: 6px; background: var(--field); color: #f0f0f0; font-weight: 500; overflow: hidden; }
.combo.percent { width: 104px; }
.combo input { flex: 1; min-width: 0; padding-left: 6px; }
.combo button { display: flex; align-items: center; justify-content: center; width: 30px; padding-top: 4px; border-left: 2px solid var(--stroke); color: #dcdcdc; }
.paint { display: grid; gap: 8px; padding: 4px 9px 16px 8px; }
.paint label { margin-right: 20px; }
.falloff { padding: 21px 10px 17px 8px; }
.falloff h3 { margin-bottom: 20px; }
.falloff label { margin-right: 3px; }
.push { display: block; width: 248px; height: 48px; margin: 18px auto 0; border: 2px solid var(--stroke); border-radius: 6px; background: var(--field); color: #f0f0f0; font-weight: 500; }
.render { padding: 23px 8px 17px; }
.render h3 { margin: 0 0 20px 8px; }
.check { display: flex; align-items: center; gap: 16px; color: #f0f0f0; font-weight: 500; }
.check input { appearance: none; width: 20px; height: 20px; border: 2px solid #858585; border-radius: 5px; background: #4c4c4c; }
.check input:checked { border-color: #d8d8d8; background: #d8d8d8; position: relative; }
.check input:checked::after { content: ""; position: absolute; left: 5px; top: 0; width: 6px; height: 12px; border: solid #333; border-width: 0 3px 3px 0; transform: rotate(40deg); }
.unlit { width: 145px; }
.overlays { border: 0; padding: 21px 10px 0 8px; }
.overlays .spread { margin-top: 20px; }
.overlays label[for] { margin-right: 6px; }
.colour { padding-left: 44px; gap: 19px; }
.well { width: 56px; height: 36px; border: 2px solid #333; background: #000; }
.foot { display: flex; align-items: center; justify-content: flex-end; height: 50px; padding-right: 58px; border-top: 2px solid #3e3e3e; }
.properties .foot { gap: 34px; }

.layers { flex: 1; display: flex; flex-direction: column; }
.bar { display: flex; align-items: center; border-bottom: 2px solid #444; }
.filter { height: 64px; padding: 10px 19px 0 6px; }
.kind { flex: none; width: 178px; }
.kind select { padding-left: 42px; }
.kind .lead { position: absolute; left: 18px; top: 9px; color: #dcdcdc; }
.filter .icons { flex: 1; display: flex; align-items: center; justify-content: space-between; padding: 0 24px 0 22px; }
.toggle { display: flex; align-items: flex-start; width: 20px; height: 38px; border: 2px solid #666; border-radius: 10px; background: #404040; }
.toggle i { width: 18px; height: 18px; margin: -1px; border-radius: 9px; background: #dcdcdc; flex: none; }
.off { color: #858585; }
.off .select select, .off .combo { border-color: #606060; background: #505050; color: #757575; font-weight: 400; }
.off .combo button { border-color: #606060; color: #707070; }
.off .select > svg:last-child { color: #707070; }
.off .plain { color: #949494; }
.blend { height: 56px; padding: 2px 21px 0 6px; }
.blend label { margin: 0 5px 0 7px; }
.locks { height: 60px; padding: 0 21px 2px 10px; border-color: #4a4a4a; }
.locks .icons { flex: 1; display: flex; align-items: center; justify-content: space-between; padding: 0 50px 0 14px; }
.locks label { margin-right: 5px; }
.layer-list { flex: 1; background: #4e4e4e; }
.layer-list li { display: flex; height: 73px; background: var(--bg); border-bottom: 2px solid #464646; }
.eye { display: flex; align-items: center; justify-content: center; width: 61px; border-right: 2px solid #464646; color: #dcdcdc; }
.layer { display: flex; align-items: center; padding-left: 6px; color: #f0f0f0; font-weight: 500; }
.layer .wide { width: 18px; height: 12px; }
.layer > svg:nth-child(2) { margin: 0 13px 0 7px; }
.thumb { width: 65px; height: 55px; margin: 0 15px 0 8px; border: 2px solid #2e2e2e; }
.blank { background: #fff; }
.child { padding-left: 31px; }
.layers .foot { justify-content: space-between; padding: 0 56px 0 78px; }
.arrow { position: relative; }
.arrow::after { content: ""; position: absolute; right: -8px; bottom: -6px; border: solid transparent; border-width: 5px 4px 0; border-top-color: currentColor; }
.arrow.dim::after { bottom: -3px; border-top-color: #6c6c6c; }

/* dock */
.dock-area {
  height: 116px; padding: 8px 64px 6px 0; border-top: 1px solid #000;
  background:
    radial-gradient(ellipse 60px 40px at 3470px 30px, rgba(70, 66, 20, .6), transparent),
    linear-gradient(90deg, #040502 0, #0a1004 50%, #20170a 62%, #1e1c0a 78%, #2c2109 92%, #2d210c 98%, #38350f 100%);
}
.dock { display: flex; align-items: flex-start; height: 102px; margin-left: -35px; padding: 13px 18px 0; border: 2px solid rgba(160, 160, 140, .35); border-radius: 30px; background: linear-gradient(90deg, #1d1f15 0, #191d17 25%, #181c15 50%, #2b2314 62%, #26240f 75%, #2f2413 88%, #33260f 100%); }
.apps { flex: 1; display: flex; justify-content: space-between; }
.app { position: relative; width: 65px; height: 65px; }
.app svg { width: 65px; height: 65px; overflow: visible; }
.run::after { content: ""; position: absolute; left: 28px; bottom: -18px; width: 8px; height: 8px; border-radius: 4px; background: #a3a49a; }
.rule { width: 2px; height: 74px; margin: 0 28px; background: #5b5848; }
.extras { display: flex; gap: 19px; }
.wd { width: 80px; height: 66px; margin-left: -8px; border-radius: 5px; background: #0566a8; color: #fff; font: italic 900 42px/66px Inter, sans-serif; }
.extras + .rule { margin: 0 0 0 20px; }
.minis { display: flex; gap: 10px; margin-left: 22px; margin-top: -6px; }
.mini { position: relative; display: flex; align-items: center; width: 74px; height: 76px; }
.shot { width: 74px; height: 36px; }
.shot.tall { height: 76px; }
.badge { position: absolute; right: 0; bottom: 2px; width: 25px; height: 25px; overflow: visible; }
.bin { margin-left: 8px; width: 58px; height: 76px; }
.bin svg { width: 58px; height: 76px; overflow: visible; }
</style>
